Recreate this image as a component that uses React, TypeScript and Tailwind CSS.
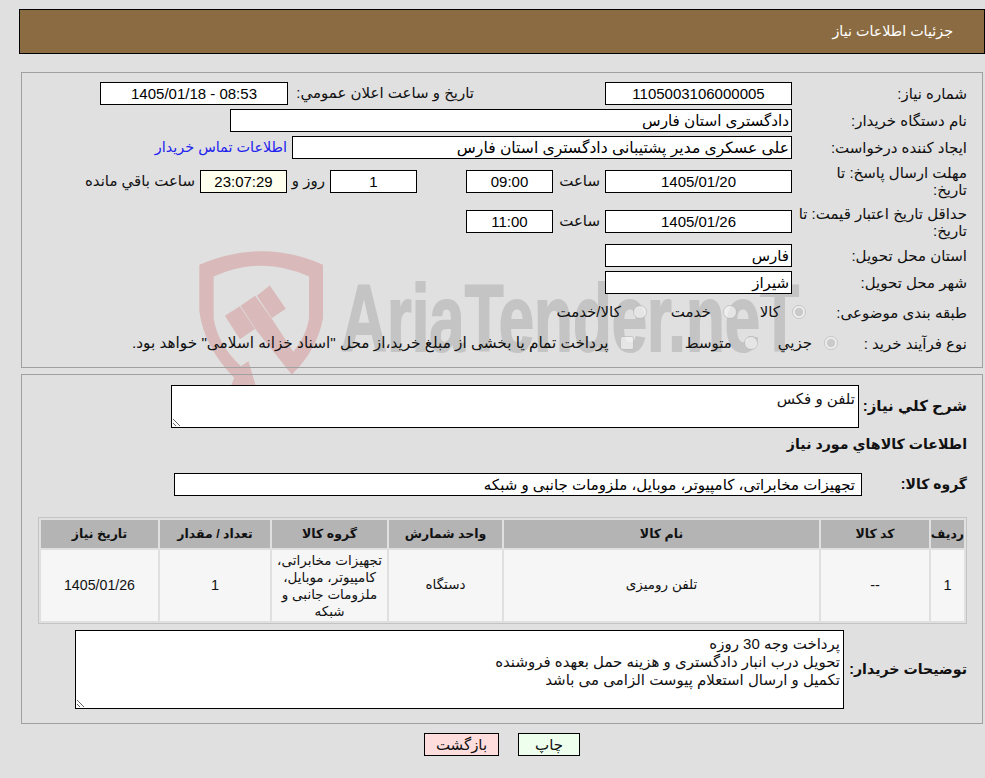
const FONT = "font-['Liberation_Sans','DejaVu_Sans',sans-serif]";

function Box({ w, value, center = false, bg = "bg-white", pr = "pr-[2px]", size = "text-[15px]" }: { w: string; value: string; center?: boolean; bg?: string; pr?: string; size?: string }) {
  return (
    <input
      readOnly
      value={value}
      dir="rtl"
      className={`${w} ${bg} ${pr} ${size} h-[23px] shrink-0 border border-black pl-[2px] text-black outline-none ${center ? "text-center" : "text-right"}`}
    />
  );
}

function Label({ children, w = "w-[175px]" }: { children: React.ReactNode; w?: string }) {
  return <div className={`${w} shrink-0 whitespace-nowrap text-[15px] leading-[17px] text-[#111]`}>{children}</div>;
}

function Radio({ label, checked = false, ml, gap = "mr-[12px]" }: { label: string; checked?: boolean; ml: string; gap?: string }) {
  return (
    <label className={`flex items-center ${ml}`}>
      <input type="radio" disabled checked={checked} readOnly className="m-0 h-[14px] w-[14px]" />
      <span className={`${gap} text-[15px]`}>{label}</span>
    </label>
  );
}

// AriaTender logo behind the form
function Watermark() {
  return (
    <div dir="ltr" className="pointer-events-none absolute left-[196px] top-[248px] flex">
      <svg width="133" height="140" viewBox="590 40 400 420" className="shrink-0">
        <g fill="#d9b9b9">
          <path d="M600 90 Q790 8 972 90 L972 250 Q955 345 878 420 L852 385 Q920 320 930 250 L930 125 Q790 60 643 125 L643 250 Q655 330 725 395 L748 380 L770 455 L695 455 L705 430 Q615 340 600 230 Z" />
          <path d="M724 213 L768 183 L820 255 L905 385 L878 420 L770 285 Z" />
          <path d="M677 243 L722 215 L767 283 L722 314 Z" />
          <path d="M773 183 L812 152 L860 222 L818 250 Z" />
        </g>
      </svg>
      <svg width="470" height="112" viewBox="0 0 470 112" className="ml-[10px] shrink-0">
        <text x="2" y="103" textLength="458" lengthAdjust="spacingAndGlyphs" fontFamily="Liberation Sans, sans-serif" fontWeight="700" fontSize="94" fill="#c4c4c4" stroke="#c4c4c4" strokeWidth="2">
          AriaTender.neT
        </text>
      </svg>
    </div>
  );
}

export default function App() {
  return (
    <div dir="rtl" className={`${FONT} relative min-h-screen overflow-hidden bg-[#e0e0e0] pt-[9px] text-[15px] text-[#111]`}>
      <Watermark />

      <div className="relative ml-[19px] flex h-[45px] items-center border border-black bg-[#8b6c42] pr-[31px] text-[14.3px] text-white">
        جزئیات اطلاعات نیاز
      </div>

      <div className="relative mt-[18px] mr-[2px] ml-[21px] h-[296px] border border-[#a0a0a0] pt-[7px] pr-[15px]">
        <div className="flex h-[27px] items-center">
          <Label>شماره نیاز:</Label>
          <Box w="w-[187px]" value="1105003106000005" center />
          <div className="mr-[131px] w-[182px] shrink-0 whitespace-nowrap">تاریخ و ساعت اعلان عمومي:</div>
          <div className="mr-[4px]"><Box w="w-[188px]" value="08:53 - 1405/01/18" center /></div>
        </div>
        <div className="flex h-[27px] items-center">
          <Label>نام دستگاه خریدار:</Label>
          <Box w="w-[562px]" value="دادگستری استان فارس" size="text-[15.2px]" />
        </div>
        <div className="flex h-[27px] items-center">
          <Label>ایجاد کننده درخواست:</Label>
          <Box w="w-[500px]" value="علی عسکری مدیر پشتیبانی دادگستری استان فارس" size="text-[15.6px]" />
          <a className="mr-[5px] whitespace-nowrap text-[14.4px] text-[#2222ee]">اطلاعات تماس خریدار</a>
        </div>
        <div className="flex h-[40px] items-center">
          <Label>مهلت ارسال پاسخ: تا<br />تاریخ:</Label>
          <Box w="w-[187px]" value="1405/01/20" center />
          <div className="w-[52px] shrink-0 pr-[5px]">ساعت</div>
          <Box w="w-[87px]" value="09:00" center />
          <div className="w-[49px] shrink-0" />
          <Box w="w-[87px]" value="1" center />
          <div className="w-[43px] shrink-0 pr-[5px]">روز و</div>
          <Box w="w-[87px]" value="23:07:29" center bg="bg-[#ffffee]" />
          <div className="mr-[5px] whitespace-nowrap">ساعت باقي مانده</div>
        </div>
        <div className="flex h-[41px] items-center">
          <Label>حداقل تاریخ اعتبار قیمت: تا<br />تاریخ:</Label>
          <Box w="w-[187px]" value="1405/01/26" center />
          <div className="w-[52px] shrink-0 pr-[5px]">ساعت</div>
          <Box w="w-[87px]" value="11:00" center />
        </div>
        <div className="flex h-[27px] items-center">
          <Label>استان محل تحویل:</Label>
          <Box w="w-[187px]" value="فارس" />
        </div>
        <div className="flex h-[27px] items-center">
          <Label>شهر محل تحویل:</Label>
          <Box w="w-[187px]" value="شیراز" />
        </div>
        <div className="flex h-[32px] items-center">
          <Label w="w-[161px]">طبقه بندی موضوعی:</Label>
          <Radio label="کالا" checked ml="" />
          <Radio label="خدمت" ml="mr-[23px]" />
          <Radio label="کالا/خدمت" ml="mr-[24px]" />
        </div>
        <div className="flex h-[30px] items-center">
          <Label w="w-[129px]">نوع فرآیند خرید :</Label>
          <Radio label="جزيي" checked ml="" />
          <Radio label="متوسط" ml="mr-[20px]" />
          <label className="mr-[51px] flex items-center">
            <input type="checkbox" disabled className="m-0 h-[14px] w-[14px]" />
            <span className="mr-[11px] whitespace-nowrap text-[15.3px]">پرداخت تمام یا بخشی از مبلغ خرید،از محل "اسناد خزانه اسلامی" خواهد بود.</span>
          </label>
        </div>
      </div>

      <div className="relative mt-[6px] mr-[2px] ml-[21px] h-[350px] border border-[#a0a0a0] pt-[10px] pr-[15px]">
        <div className="flex items-center">
          <div className="w-[108px] shrink-0 text-[15px] font-bold">شرح كلي نياز:</div>
          <textarea readOnly dir="rtl" defaultValue="تلفن و فکس" className="h-[43px] w-[688px] border border-black bg-white px-[3px] py-[2px] text-[15px] outline-none" />
        </div>
        <div className="mt-[6px] h-[20px] text-[14.2px] font-bold leading-[20px]">اطلاعات كالاهاي مورد نياز</div>
        <div className="mt-[19px] flex items-center">
          <div className="w-[105px] shrink-0 text-[14px] font-bold">گروه کالا:</div>
          <Box w="w-[688px]" pr="pr-[6px]" value="تجهیزات مخابراتی، کامپیوتر، موبایل، ملزومات جانبی و شبکه" />
        </div>
        <table className="mt-[21px] w-[928px] table-fixed border-separate border-spacing-[2px] border border-[#c4c4c4] text-center text-[13.5px]">
          <colgroup>
            <col className="w-[33px]" />
            <col className="w-[108px]" />
            <col className="w-[315px]" />
            <col className="w-[113px]" />
            <col className="w-[115px]" />
            <col className="w-[110px]" />
            <col className="w-[117px]" />
          </colgroup>
          <thead>
            <tr className="h-[28px] bg-[#b4b4b4] text-[12.5px] font-bold">
              <th className="font-bold">ردیف</th>
              <th className="font-bold">کد کالا</th>
              <th className="font-bold">نام کالا</th>
              <th className="font-bold">واحد شمارش</th>
              <th className="font-bold">گروه کالا</th>
              <th className="font-bold">تعداد / مقدار</th>
              <th className="font-bold">تاریخ نیاز</th>
            </tr>
          </thead>
          <tbody>
            <tr className="h-[71px] bg-[#f6f6f6]">
              <td className="text-[14.5px]">1</td>
              <td className="text-[14.5px]">--</td>
              <td>تلفن رومیزی</td>
              <td>دستگاه</td>
              <td className="leading-[17px]">تجهیزات مخابراتی، کامپیوتر، موبایل، ملزومات جانبی و شبکه</td>
              <td className="text-[14.5px]">1</td>
              <td className="text-[14.2px]">1405/01/26</td>
            </tr>
          </tbody>
        </table>
        <div className="mt-[6px] flex items-center">
          <div className="w-[123px] shrink-0 whitespace-nowrap text-[14.2px] font-bold">توضیحات خریدار:</div>
          <textarea
            readOnly
            dir="rtl"
            defaultValue={"پرداخت وجه 30 روزه\nتحویل درب انبار دادگستری و هزینه حمل بعهده فروشنده\nتکمیل و ارسال استعلام پیوست الزامی می باشد"}
            className="h-[79px] w-[769px] border border-black bg-white px-[3px] pt-[4px] text-[15px] leading-[18px] outline-none"
          />
        </div>
      </div>

      <div className="relative mt-[9px] flex justify-center gap-[19px] pl-[19px]">
        <button className="h-[23px] w-[62px] border border-black bg-[#eeffee] text-[15px]">چاپ</button>
        <button className="h-[23px] w-[75px] border border-black bg-[#ffdddd] text-[15px]">بازگشت</button>
      </div>
    </div>
  );
}
